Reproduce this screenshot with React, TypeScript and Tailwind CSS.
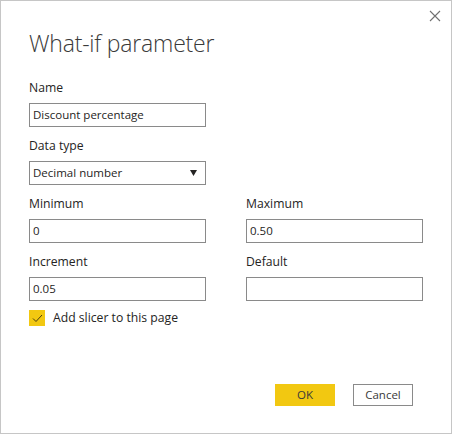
import React from "react";

const font = { fontFamily: '"Open Sans", "Noto Sans", sans-serif' };

function Field({ label, value }: { label: string; value: string }) {
  return (
    <div className="flex flex-col w-[177px]">
      <span className="text-[12.2px] leading-[20px] text-[#252423]">{label}</span>
      <div className="mt-[5px] h-[24px] border border-[#8a8a8a] bg-white px-[3px] flex items-center text-[11.5px] text-[#252423]">
        {value}
      </div>
    </div>
  );
}

export default function App() {
  return (
    <div
      style={font}
      className="relative w-[452px] h-[434px] bg-white border border-[#c6c6c6] overflow-hidden"
    >
      {/* close button */}
      <button className="absolute top-[8px] right-[10px] w-[13px] h-[13px] flex items-center justify-center">
        <svg width="12" height="12" viewBox="0 0 12 12">
          <path d="M1 1L11 11M11 1L1 11" stroke="#707070" strokeWidth="1.1" />
        </svg>
      </button>

      <div className="pl-[28px] pt-[26px] flex flex-col">
        <h1 className="text-[23px] leading-[32px] font-light text-[#3a3a3a] tracking-[-0.2px]">
          What-if parameter
        </h1>

        <div className="mt-[19px] flex flex-col">
          <Field label="Name" value="Discount percentage" />

          <div className="mt-[9px] flex flex-col w-[177px]">
            <span className="text-[12.2px] leading-[20px] text-[#252423]">Data type</span>
            <div className="mt-[5px] h-[24px] border border-[#8a8a8a] bg-white px-[3px] flex items-center justify-between text-[11.5px] text-[#252423]">
              <span>Decimal number</span>
              <svg width="7" height="6" viewBox="0 0 7 6" className="mr-[5px]">
                <path d="M0 0H7L3.5 6Z" fill="#252423" />
              </svg>
            </div>
          </div>

          <div className="mt-[9px] flex gap-[40px]">
            <Field label="Minimum" value="0" />
            <Field label="Maximum" value="0.50" />
          </div>

          <div className="mt-[9px] flex gap-[40px]">
            <Field label="Increment" value="0.05" />
            <Field label="Default" value="" />
          </div>

          <label className="mt-[9px] flex items-center gap-[8px] h-[16px]">
            <span className="w-[16px] h-[16px] bg-[#f2c811] flex items-center justify-center">
              <svg width="11" height="9" viewBox="0 0 11 9">
                <path d="M1 4.5L4 7.5L10 1" fill="none" stroke="#4a3d10" strokeWidth="1" />
              </svg>
            </span>
            <span className="text-[12.2px] text-[#252423]">Add slicer to this page</span>
          </label>
        </div>
      </div>

      <div className="mt-[58px] pr-[38px] flex justify-end gap-[18px]">
        <button className="w-[60px] h-[22px] bg-[#f2c811] text-[11.5px] text-[#3a3a3a]">OK</button>
        <button className="w-[60px] h-[22px] border border-[#8a8a8a] bg-white text-[11.5px] text-[#3a3a3a]">
          Cancel
        </button>
      </div>
    </div>
  );
}
